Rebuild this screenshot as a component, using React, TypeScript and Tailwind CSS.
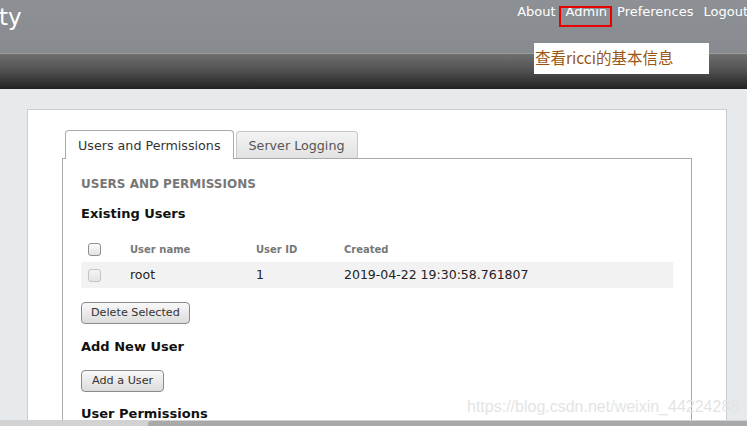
export default function App() {
  const font = { fontFamily: '"DejaVu Sans", "Noto Sans CJK SC", sans-serif' };
  return (
    <div className="relative flex h-[426px] w-[747px] flex-col overflow-hidden bg-[#e7eaed]" style={font}>
      {/* header */}
      <div className="flex h-[53px] shrink-0 items-start justify-between bg-gradient-to-b from-[#8d9195] to-[#878b8f]">
        <span className="-ml-[1px] mt-[3px] text-[23px] leading-[28px] text-white">ty</span>
        <nav className="mr-[-1px] mt-[3px] flex gap-[10px] text-[13px] leading-[18px] text-white">
          <span>About</span>
          <span>Admin</span>
          <span>Preferences</span>
          <span>Logout</span>
        </nav>
      </div>
      <div className="h-[1px] shrink-0 bg-[#9a9b9c]" />
      <div className="h-[35px] shrink-0 bg-gradient-to-b from-[#6f6f6f] via-[#4f4f4f] to-[#222]" />

      {/* body */}
      <div className="flex-1 overflow-hidden pl-[27px] pt-[20px]">
        <div className="h-full w-[700px] border border-b-0 border-[#c9ced2] bg-white px-[34px] pt-[20px]">
          <div className="flex items-end gap-[2px]">
            <div className="-mb-px ml-[3px] h-[29px] rounded-t-[4px] border border-b-0 border-[#aaa] bg-white px-[12px] pt-[5px] text-[12.7px] text-[#333]">
              Users and Permissions
            </div>
            <div className="h-[27px] rounded-t-[4px] border border-b-0 border-[#c8c8c8] bg-gradient-to-b from-[#f3f3f3] to-[#e2e2e2] px-[12px] pt-[4px] text-[12.7px] text-[#555]">
              Server Logging
            </div>
          </div>
          <div className="h-[300px] border border-b-0 border-[#aaa] px-[18px] pt-[17px]">
            <h2 className="text-[12px] font-bold leading-[16px] text-[#777]">USERS AND PERMISSIONS</h2>
            <h3 className="mt-[14px] text-[13px] font-bold leading-[16px] text-[#111]">Existing Users</h3>

            <table className="mt-[15px] w-[592px] border-collapse text-left">
              <thead>
                <tr className="h-[25px] text-[10px] font-bold text-[#777]">
                  <th className="w-[49px] pl-[7px] pb-[1px]">
                    <Box />
                  </th>
                  <th className="w-[126px] pb-[1px]">User name</th>
                  <th className="w-[88px] pb-[1px]">User ID</th>
                  <th className="pb-[1px]">Created</th>
                </tr>
              </thead>
              <tbody>
                <tr className="h-[26px] bg-[#f2f2f2] text-[12.5px] text-[#222]">
                  <td className="pl-[7px]">
                    <Box dim />
                  </td>
                  <td>root</td>
                  <td>1</td>
                  <td>2019-04-22 19:30:58.761807</td>
                </tr>
              </tbody>
            </table>

            <button className="mt-[14px] h-[22px] rounded-[4px] border border-[#8a8a8a] bg-gradient-to-b from-[#f8f8f8] to-[#dcdcdc] px-[9px] text-[11.2px] leading-[18px] text-[#333]">
              Delete Selected
            </button>
            <h3 className="mt-[15px] text-[13px] font-bold leading-[16px] text-[#111]">Add New User</h3>
            <button className="mt-[15px] h-[22px] rounded-[4px] border border-[#8a8a8a] bg-gradient-to-b from-[#f8f8f8] to-[#dcdcdc] px-[10px] text-[11.2px] leading-[18px] text-[#333]">
              Add a User
            </button>
            <h3 className="mt-[14px] text-[13px] font-bold leading-[16px] text-[#111]">User Permissions</h3>
          </div>
        </div>
      </div>

      {/* horizontal scrollbar */}
      <div className="flex h-[6px] shrink-0 bg-[#d2d2d2]">
        <div className="ml-[148px] mt-[1px] h-[5px] flex-1 rounded-tl-[3px] bg-[#a9a9a9]" />
      </div>

      {/* annotations */}
      <div className="absolute left-[559px] top-[6px] h-[21px] w-[53px] border-2 border-[#e60000]" />
      <div
        className="absolute left-[534px] top-[43px] h-[31px] w-[175px] bg-white pl-[1px] pt-[3px] text-[15.5px] leading-[22px] text-[#9a5514]"
        style={{ fontFamily: '"Noto Sans CJK SC", sans-serif' }}
      >
        查看ricci的基本信息
      </div>
      <div
        className="absolute left-[467px] top-[397px] text-[16px] leading-[20px] text-[#e4e4e4]"
        style={{ fontFamily: '"Liberation Sans", Arial, sans-serif' }}
      >
        https://blog.csdn.net/weixin_44224288
      </div>
    </div>
  );
}

function Box({ dim }: { dim?: boolean }) {
  return (
    <div
      className={
        dim
          ? 'h-[13px] w-[13px] rounded-[3px] border border-[#c4c4c4] bg-gradient-to-b from-[#f4f4f4] to-[#e4e4e4]'
          : 'h-[13px] w-[13px] rounded-[3px] border border-[#8f8f8f] bg-gradient-to-b from-[#fdfdfd] to-[#e2e2e2]'
      }
    />
  );
}
